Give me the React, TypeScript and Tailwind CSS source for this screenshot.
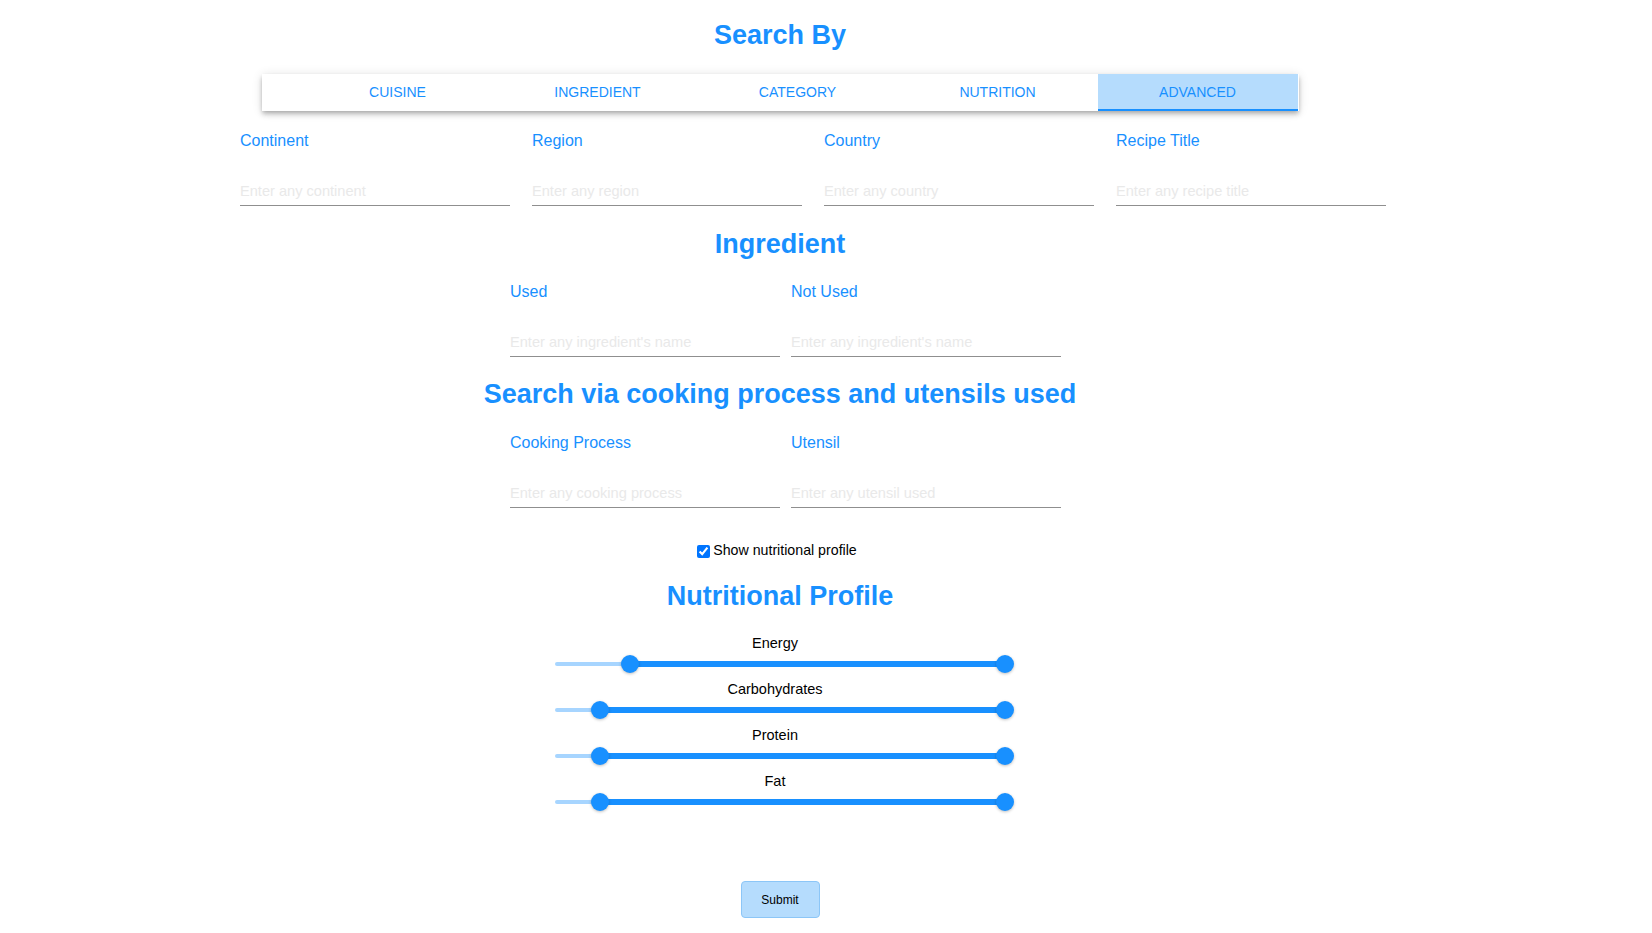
import React from "react";

const tabs = ["Cuisine", "Ingredient", "Category", "Nutrition", "Advanced"];

const sliders = [
  { label: "Energy", from: 0.1667 },
  { label: "Carbohydrates", from: 0.1 },
  { label: "Protein", from: 0.1 },
  { label: "Fat", from: 0.1 },
];

function Field({ label, placeholder }: { label: string; placeholder: string }) {
  return (
    <div className="flex w-[270px] flex-col">
      <label className="text-[16px] leading-[18px] text-[#1890ff]">{label}</label>
      <input
        placeholder={placeholder}
        className="mt-[24px] h-[32px] w-full border-b border-[#8f8f8f] bg-transparent pt-[2px] text-[14.6px] text-black outline-none placeholder:text-[#e9e9e9]"
      />
    </div>
  );
}

function Heading({ children, className = "" }: { children: React.ReactNode; className?: string }) {
  return (
    <h2 className={`text-center text-[27px] font-bold leading-[32px] text-[#1890ff] ${className}`}>
      {children}
    </h2>
  );
}

function RangeSlider({ from }: { from: number }) {
  return (
    <div className="relative mt-[1px] h-[20px] w-[450px]">
      <div className="absolute left-0 right-0 top-[8px] h-[4px] rounded-full bg-[#a7d5ff]" />
      <div
        className="absolute right-0 top-[7px] h-[6px] rounded-full bg-[#1890ff]"
        style={{ left: `${from * 100}%` }}
      />
      <div
        className="absolute top-[1px] h-[18px] w-[18px] -translate-x-1/2 rounded-full bg-[#1890ff] shadow-[0_1px_3px_rgba(0,0,0,0.25)]"
        style={{ left: `${from * 100}%` }}
      />
      <div className="absolute left-full top-[1px] h-[18px] w-[18px] -translate-x-1/2 rounded-full bg-[#1890ff] shadow-[0_1px_3px_rgba(0,0,0,0.25)]" />
    </div>
  );
}

export default function App() {
  return (
    <div className="min-h-screen w-full bg-white font-['Liberation_Sans',Arial,sans-serif]">
      <div className="flex w-[1560px] flex-col pb-[15px]">
        <h1 className="pt-[19px] text-center text-[27px] font-bold leading-[32px] text-[#1890ff]">
          Search By
        </h1>

        <div className="mx-auto mt-[23px] flex h-[37px] w-[1037px] bg-white pl-[36px] shadow-[0_2px_4px_-1px_rgba(0,0,0,0.2),0_4px_5px_0_rgba(0,0,0,0.14),0_1px_10px_0_rgba(0,0,0,0.12)]">
          {tabs.map((t, i) => (
            <div
              key={t}
              className={`flex w-[200px] items-center justify-center text-[14px] uppercase text-[#1890ff] ${
                i === tabs.length - 1 ? "border-b-2 border-[#1890ff] bg-[#b5dcfd] pt-[2px]" : ""
              }`}
            >
              {t}
            </div>
          ))}
        </div>

        <div className="ml-[240px] mt-[21px] flex gap-[22px]">
          <Field label="Continent" placeholder="Enter any continent" />
          <Field label="Region" placeholder="Enter any region" />
          <Field label="Country" placeholder="Enter any country" />
          <Field label="Recipe Title" placeholder="Enter any recipe title" />
        </div>

        <Heading className="mt-[22px]">Ingredient</Heading>

        <div className="ml-[510px] mt-[23px] flex gap-[11px]">
          <Field label="Used" placeholder="Enter any ingredient's name" />
          <Field label="Not Used" placeholder="Enter any ingredient's name" />
        </div>

        <Heading className="mt-[21px]">Search via cooking process and utensils used</Heading>

        <div className="ml-[510px] mt-[24px] flex gap-[11px]">
          <Field label="Cooking Process" placeholder="Enter any cooking process" />
          <Field label="Utensil" placeholder="Enter any utensil used" />
        </div>

        <label className="mt-[33px] flex h-[20px] items-center justify-center pr-[6px] text-[14.2px] text-black">
          <input type="checkbox" defaultChecked className="m-0 h-[13px] w-[13px]" />
          <span className="ml-[3px]">Show nutritional profile</span>
        </label>

        <Heading className="mt-[19px]">Nutritional Profile</Heading>

        <div className="mx-auto mt-[21px] flex w-[450px] flex-col gap-[5px]">
          {sliders.map((s) => (
            <div key={s.label} className="flex flex-col">
              <div className="pr-[10px] text-center text-[14.5px] leading-[20px] text-black">{s.label}</div>
              <RangeSlider from={s.from} />
            </div>
          ))}
        </div>

        <button className="mx-auto mt-[69px] h-[37px] w-[79px] rounded-[4px] border border-[#8cc6f7] bg-[#b5dcfd] text-[12px] text-black">
          Submit
        </button>
      </div>
    </div>
  );
}
